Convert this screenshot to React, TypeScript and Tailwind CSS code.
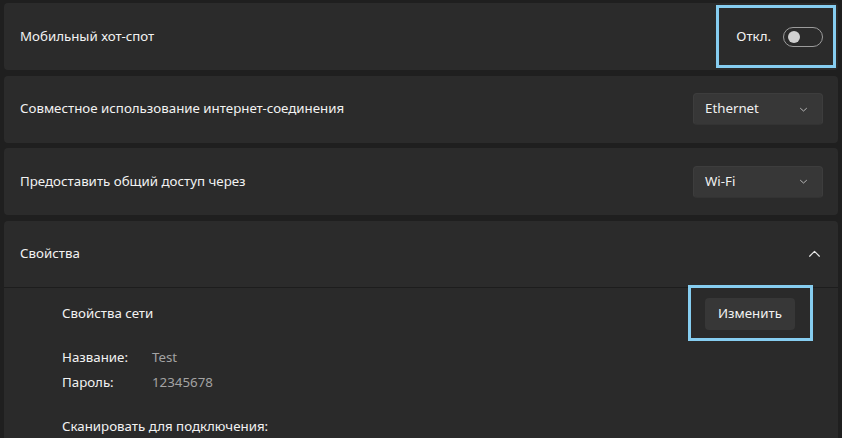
import React from "react";

function Chevron({ up = false, size = 10 }: { up?: boolean; size?: number }) {
  return (
    <svg width={size} height={size} viewBox="0 0 12 12" fill="none">
      <path
        d={up ? "M1.5 8.5 L6 4 L10.5 8.5" : "M2 4.5 L6 8 L10 4.5"}
        stroke="currentColor"
        strokeWidth="1.1"
        strokeLinecap="round"
        strokeLinejoin="round"
      />
    </svg>
  );
}

function Dropdown({ label }: { label: string }) {
  return (
    <div className="w-[130px] h-[32px] rounded-[4px] bg-[#373737] border border-[#3d3d3d] border-b-[#333333] flex items-center justify-between pl-[11px] pr-[14px] text-[#f0f0f0]">
      <span>{label}</span>
      <span className="text-[#cfcfcf]">
        <Chevron size={9} />
      </span>
    </div>
  );
}

function Card({ children }: { children: React.ReactNode }) {
  return (
    <div className="h-[67px] shrink-0 rounded-[4px] bg-[#2b2b2b] flex items-center justify-between pl-4 pr-[15px]">
      {children}
    </div>
  );
}

export default function App() {
  return (
    <div
      className="relative w-[842px] h-[438px] overflow-hidden bg-[#1f1f1f] pt-[3px] px-[4px] flex flex-col gap-[5.5px] text-[13.3px] text-[#f2f2f2]"
      style={{ fontFamily: '"Noto Sans", "Open Sans", sans-serif' }}
    >
      {/* Hotspot toggle */}
      <Card>
        <span>Мобильный хот-спот</span>
        <div className="flex items-center gap-[12px]">
          <span>Откл.</span>
          <div className="w-[40px] h-[20px] rounded-full border border-[#9c9c9c] flex items-center pl-[4px]">
            <div className="w-[12px] h-[12px] rounded-full bg-[#d0d0d0]" />
          </div>
        </div>
      </Card>

      <Card>
        <span>Совместное использование интернет-соединения</span>
        <Dropdown label="Ethernet" />
      </Card>

      <Card>
        <span>Предоставить общий доступ через</span>
        <Dropdown label="Wi-Fi" />
      </Card>

      {/* Expanded properties */}
      <div className="flex-1 rounded-t-[4px] bg-[#2b2b2b] flex flex-col">
        <div className="h-[67px] shrink-0 flex items-center justify-between pl-4 pr-[17px] border-b border-[#1d1d1d]">
          <span>Свойства</span>
          <span className="text-[#e8e8e8]">
            <Chevron up size={13} />
          </span>
        </div>
        <div className="bg-[#2a2a2a] flex-1 pl-[58px] pr-[43px] pt-[10px]">
          <div className="flex items-center justify-between">
            <span>Свойства сети</span>
            <button className="w-[90px] h-[32px] rounded-[4px] bg-[#373737] text-[#f2f2f2]">
              Изменить
            </button>
          </div>
          <div className="mt-[18px] flex flex-col gap-[5px]">
            <div className="flex h-[20px] items-center">
              <span className="w-[90px]">Название:</span>
              <span className="text-[#a3a3a3]">Test</span>
            </div>
            <div className="flex h-[20px] items-center">
              <span className="w-[90px]">Пароль:</span>
              <span className="text-[#a3a3a3]">12345678</span>
            </div>
          </div>
          <div className="mt-[24px] h-[20px] flex items-center">Сканировать для подключения:</div>
        </div>
      </div>

      {/* annotation highlights */}
      <div className="absolute left-[716px] top-[5px] w-[120px] h-[63px] border-[3px] border-[#86cdf0] pointer-events-none" />
      <div className="absolute left-[688px] top-[285px] w-[125px] h-[56px] border-[3px] border-[#86cdf0] pointer-events-none" />
    </div>
  );
}
